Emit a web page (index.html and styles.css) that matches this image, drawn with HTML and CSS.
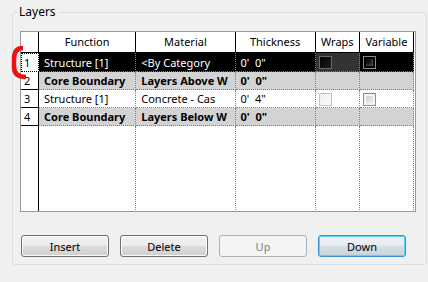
FILE: index.html
```html
<!DOCTYPE html>
<html lang="en">
<head>
    <meta charset="UTF-8">
    <title>Layers</title>
    <link rel="stylesheet" href="styles.css">
</head>
<body>
    <fieldset class="layers">
        <legend>Layers</legend>

        <div class="grid-frame">
            <table class="grid">
                <colgroup>
                    <col class="col-row">
                    <col class="col-function">
                    <col class="col-material">
                    <col class="col-thickness">
                    <col class="col-wraps">
                    <col class="col-variable">
                </colgroup>
                <thead>
                    <tr>
                        <th class="rowhead"></th>
                        <th>Function</th>
                        <th>Material</th>
                        <th>Thickness</th>
                        <th>Wraps</th>
                        <th>Variable</th>
                    </tr>
                </thead>
                <tbody>
                    <tr class="selected">
                        <td class="rowhead focus">1</td>
                        <td>Structure [1]</td>
                        <td>&lt;By Category</td>
                        <td>0'&nbsp; 0"</td>
                        <td class="wraps"><span class="check check-dark"></span></td>
                        <td><span class="check check-dark-var"></span></td>
                    </tr>
                    <tr class="core">
                        <td class="rowhead">2</td>
                        <td>Core Boundary</td>
                        <td>Layers Above W</td>
                        <td>0'&nbsp; 0"</td>
                        <td></td>
                        <td></td>
                    </tr>
                    <tr>
                        <td class="rowhead">3</td>
                        <td>Structure [1]</td>
                        <td>Concrete - Cas</td>
                        <td>0'&nbsp; 4"</td>
                        <td class="wraps"><span class="check check-off"></span></td>
                        <td><span class="check check-var"></span></td>
                    </tr>
                    <tr class="core">
                        <td class="rowhead">4</td>
                        <td>Core Boundary</td>
                        <td>Layers Below W</td>
                        <td>0'&nbsp; 0"</td>
                        <td></td>
                        <td></td>
                    </tr>
                    <tr class="filler">
                        <td class="rowhead"></td>
                        <td></td>
                        <td></td>
                        <td></td>
                        <td></td>
                        <td></td>
                    </tr>
                </tbody>
            </table>
        </div>

        <div class="buttons">
            <button class="btn">Insert</button>
            <button class="btn">Delete</button>
            <button class="btn" disabled>Up</button>
            <button class="btn btn-default">Down</button>
        </div>
    </fieldset>

    <!-- red markup drawn over the row header -->
    <svg class="marker" width="20" height="36" viewBox="0 0 20 36">
        <path d="M13 3 C6 3 4 8 4 14 L4 22 C4 29 8 32 16 32" fill="none" stroke="#f01010" stroke-width="4.5"/>
    </svg>
</body>
</html>
```

FILE: styles.css
```css
:root {
    --window-bg: #f0f0f0;
    --group-border: #d5dfe5;
    --grid-line: #808080;
    --core-bg: #d3d3d3;
    --text-color: #000;
}

body {
    margin: 0;
    padding: 5px 0 0 12px;
    background-color: var(--window-bg);
    font-family: "Noto Sans", "Open Sans", sans-serif;
    font-size: 11px;
    color: var(--text-color);
    position: relative;
}

.layers {
    box-sizing: border-box;
    width: 415px;
    height: 260px;
    margin: 0;
    padding: 12px 7px 8px 7px;
    border: 1px solid var(--group-border);
    border-radius: 3px;
    min-width: 0;
}

.layers legend {
    margin-left: -3px;
    padding: 0 2px;
    line-height: 14px;
    font-size: 12px;
}

.grid-frame {
    width: 394px;
    height: 179px;
    border: 1px solid #9a9a9a;
    background-color: white;
    overflow: hidden;
}

.grid {
    border-collapse: separate;
    border-spacing: 0;
    table-layout: fixed;
    width: 393px;
}

.col-row { width: 18px; }
.col-function { width: 97px; }
.col-material { width: 99px; }
.col-thickness { width: 80px; }
.col-wraps { width: 44px; }
.col-variable { width: 54px; }

.grid th,
.grid td {
    box-sizing: border-box;
    padding: 0 5px;
    white-space: nowrap;
    overflow: hidden;
    text-align: left;
}

.grid th {
    height: 21px;
    line-height: 20px;
    font-weight: normal;
    text-align: center;
    border-right: 1px solid #000;
    border-bottom: 1px solid #000;
}

.grid th:last-child {
    padding: 0 2px;
}

.grid td {
    height: 18px;
    line-height: 17px;
    border-right: 1px dotted var(--grid-line);
    border-bottom: 1px dotted var(--grid-line);
}

.grid td.rowhead {
    padding: 0 3px;
    background-color: white;
    color: var(--text-color);
    font-weight: normal;
    border-right: 1px solid #000;
    border-bottom: 1px solid #000;
}

.grid td.focus {
    border: 1px dotted #000;
    padding-left: 2px;
}

.grid .filler td {
    height: 86px;
}

.selected td {
    background-color: #000;
    color: white;
}

.selected td.wraps {
    background-color: #333;
}

.core td {
    background-color: var(--core-bg);
    font-weight: bold;
}

.grid td:nth-child(5),
.grid td:nth-child(6) {
    padding: 0 3px;
    vertical-align: top;
}

.check {
    display: block;
    box-sizing: border-box;
    width: 13px;
    height: 13px;
    margin-top: 3px;
}

.check-dark {
    border: 1px solid #6a6a6a;
    background: linear-gradient(135deg, #050505, #1c1c1c);
}

.check-dark-var {
    border: 1px solid #8a8a8a;
    background: #111;
    box-shadow: inset 0 0 0 2px #000, inset -3px -3px 3px #5a5a5a;
}

.check-off {
    border: 1px solid #c4c4c4;
    background: linear-gradient(135deg, #eeeeee, #fbfbfb);
}

.check-var {
    border: 1px solid #8e8f8f;
    background: linear-gradient(135deg, #c9cad3, #f6f6f8);
    box-shadow: inset 0 0 0 2px #f4f4f4;
}

.buttons {
    display: flex;
    gap: 11px;
    margin: 23px 0 0 1px;
}

.btn {
    box-sizing: border-box;
    width: 88px;
    height: 22px;
    padding: 0;
    font-family: inherit;
    font-size: 11px;
    color: var(--text-color);
    border: 1px solid #707070;
    border-radius: 3px;
    background: linear-gradient(#f2f2f2 0%, #ebebeb 50%, #dddddd 51%, #cfcfcf 100%);
    box-shadow: inset 0 0 0 1px #fbfbfb;
}

.btn:disabled {
    color: #838383;
    border-color: #adb2b5;
    background: #f4f4f4;
    box-shadow: none;
}

.btn-default {
    border-color: #3c8fd0;
    box-shadow: inset 0 0 0 1px #62d0f6;
    background: linear-gradient(#eef3f6 0%, #e4ebef 50%, #d6e0e6 51%, #c8d3da 100%);
}

.marker {
    position: absolute;
    left: 10px;
    top: 45px;
}
```
